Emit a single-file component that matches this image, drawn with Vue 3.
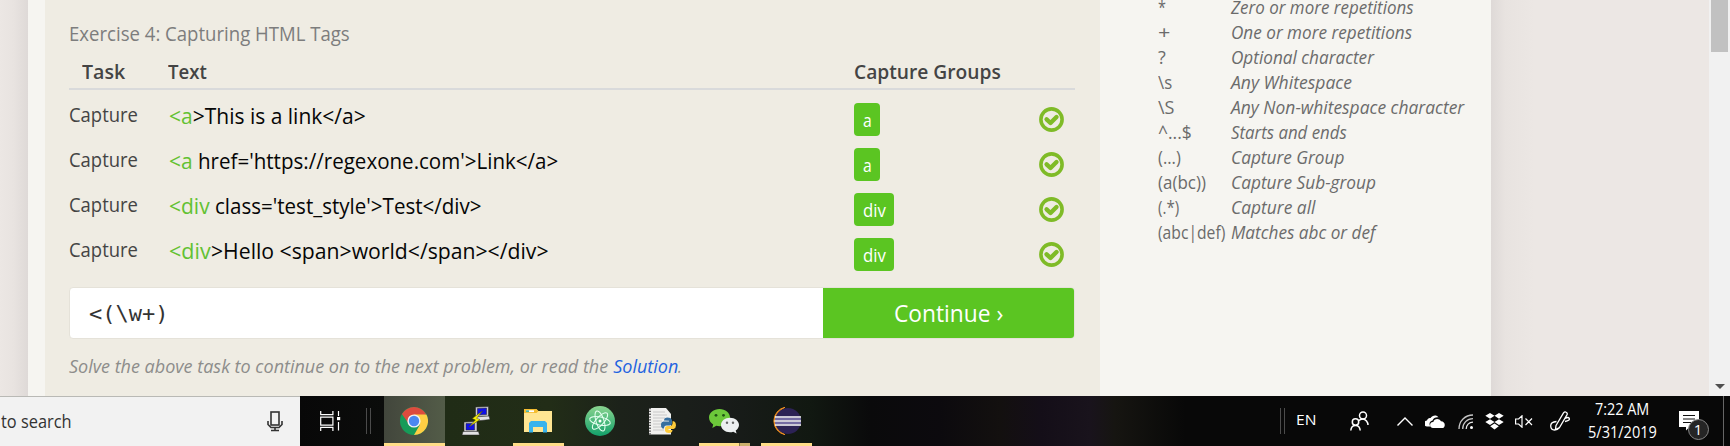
<script setup>
const applyFit = (el, { value }) => {
  el.style.transform = 'none'
  const natural = el.offsetWidth
  if (!natural) return
  el.style.transform = `scaleX(${value / natural})`
  el.style.marginRight = `${value - natural}px`
}
// Condenses a run of text to a given width.
const vFit = { mounted: applyFit, updated: applyFit }

const rows = [
  { hit: '<a', hitW: 24, rest: '>This is a link</a>', restW: 173, gap: 0, group: 'a', groupW: 9 },
  { hit: '<a', hitW: 24, rest: "href='https://regexone.com'>Link</a>", restW: 360, gap: 5, group: 'a', groupW: 9 },
  { hit: '<div', hitW: 41, rest: "class='test_style'>Test</div>", restW: 267, gap: 5, group: 'div', groupW: 23 },
  { hit: '<div', hitW: 42, rest: '>Hello <span>world</span></div>', restW: 338, gap: 0, group: 'div', groupW: 23 },
]
const notes = [
  ['*', 8, 'Zero or more repetitions', 183],
  ['+', 12, 'One or more repetitions', 181],
  ['?', 8, 'Optional character', 143],
  ['\\s', 14, 'Any Whitespace', 121],
  ['\\S', 16, 'Any Non-whitespace character', 233],
  ['^...$', 34, 'Starts and ends', 116],
  ['(...)', 23, 'Capture Group', 113],
  ['(a(bc))', 48, 'Capture Sub-group', 145],
  ['(.*)', 21, 'Capture all', 84],
  ['(abc|def)', 67, 'Matches abc or def', 144],
]
</script>

<template>
  <div class="screen">
    <div class="page">
      <div class="shade left"></div>
      <div class="stripe"></div>
      <main class="lesson">
        <div class="title"><span v-fit="281" class="t">Exercise 4: Capturing HTML Tags</span></div>
        <div class="head">
          <div class="c-task"><span v-fit="43" class="t">Task</span></div>
          <div class="c-text"><span v-fit="39" class="t">Text</span></div>
          <div class="c-group"><span v-fit="147" class="t">Capture Groups</span></div>
        </div>
        <div class="rows">
          <div v-for="(r, i) in rows" :key="i" class="row">
            <div class="c-task"><span v-fit="69" class="t">Capture</span></div>
            <div class="c-text">
              <span v-fit="r.hitW" class="t hit">{{ r.hit }}</span>
              <span v-fit="r.restW" class="t" :class="{ spaced: r.gap }">{{ r.rest }}</span>
            </div>
            <div class="c-group"><div class="badge"><span v-fit="r.groupW" class="t">{{ r.group }}</span></div></div>
            <svg class="check" width="25" height="25" viewBox="0 0 25 25">
              <circle cx="12.5" cy="12.5" r="10.6" fill="none" stroke="#7fbb27" stroke-width="3.6" />
              <path d="M7.6 12.3l3.9 3.7 6-6" fill="none" stroke="#7fbb27" stroke-width="4.4" stroke-linecap="round" stroke-linejoin="round" />
            </svg>
          </div>
        </div>
        <div class="answer">
          <div class="field"><span v-fit="79" class="t">&lt;(\w+)</span></div>
          <div class="go"><span v-fit="109" class="t">Continue ›</span></div>
        </div>
        <div class="hint">
          <span v-fit="539" class="t">Solve the above task to continue on to the next problem, or read the</span>
          <span class="ending"><span v-fit="65" class="t link">Solution</span><span v-fit="4" class="t">.</span></span>
        </div>
      </main>
      <aside class="notes">
        <div v-for="n in notes" :key="n[0]" class="note">
          <div class="sym"><span v-fit="n[1]" class="t">{{ n[0] }}</span></div>
          <div class="desc"><span v-fit="n[3]" class="t">{{ n[2] }}</span></div>
        </div>
      </aside>
      <div class="shade right"></div>
      <div class="scroll">
        <div class="thumb"></div>
        <svg width="10" height="5" viewBox="0 0 10 5"><path d="M0 0h10L5 5z" fill="#505050" /></svg>
      </div>
    </div>

    <div class="taskbar">
      <div class="search">
        <span v-fit="71" class="t">to search</span>
        <svg width="16" height="21" viewBox="0 0 16 21" fill="none" stroke="#333" stroke-width="1.6">
          <rect x="4" y="1" width="8" height="13" />
          <path d="M1 10v3.5l3 3h8l3-3V10M8 16.5V20M4 19.5h8" />
        </svg>
      </div>
      <div class="view">
        <svg width="21" height="20" viewBox="0 0 21 20" fill="none" stroke="#fff" stroke-width="1.2">
          <path d="M.7 0v3.6h12.2V0M.7 6.2h12.2v8H.7zM.7 20v-3.7h12.2V20M18.5 0v5M18.5 11v8.5" />
          <rect x="17" y="6" width="3.2" height="3.2" fill="#fff" stroke="none" />
        </svg>
      </div>
      <div class="bars first"></div>

      <div class="app active">
        <svg width="28" height="28" viewBox="0 0 28 28">
          <circle cx="14" cy="14" r="14" fill="#169b59" />
          <path d="M1.9 7A14 14 0 0 1 26.1 7L14 14 8.4 16.2z" fill="#dd4b3e" />
          <path d="M14 7.4h12.4A14 14 0 0 1 14 28l6-10.5z" fill="#ffce44" />
          <circle cx="14" cy="14" r="6.6" fill="#f3f3f3" />
          <circle cx="14" cy="14" r="5.2" fill="#4a87f0" />
        </svg>
      </div>
      <div class="app">
        <svg width="28" height="30" viewBox="0 0 28 30">
          <g stroke="#222" stroke-width=".5">
            <path d="M13.5 1l13-.5V10.500l-13 .5z" fill="#c9c9cd" />
            <path d="M15.500 2.500l9-.4v6.500l-9 .4z" fill="#1010e8" />
            <path d="M12 11l15-1 1 3.500-13 1.400z" fill="#e2e2e4" />
          </g>
          <g stroke="#222" stroke-width=".5">
            <path d="M2 16l13-.4V26H2z" fill="#c9c9cd" />
            <path d="M4 17.500h8.500V24H4z" fill="#1010e8" />
            <path d="M1 25.500h15.500l1 3.500H0z" fill="#e2e2e4" />
          </g>
          <path d="M20.500 5l-10.300 7.500 3.200 1.400L7 21l11-7.500-3.400-1.200z" fill="#f6ef08" stroke="#4b4a00" stroke-width=".5" />
        </svg>
      </div>
      <div class="app open">
        <svg width="28" height="24" viewBox="0 0 28 24">
          <path d="M0 0h12l2 2h14v21H0z" fill="#ffe592" />
          <path d="M0 0h12.5l2 2-2 2H0z" fill="#f5bd32" />
          <path d="M2 1.3h8v1.8H2z" fill="#fff" /><path d="M2 1.3h3v1.8H2z" fill="#4db7a8" />
          <path d="M5 23.6V14l2-2h14l2 2v9.6h-4V18H9v5.6z" fill="#38b3ed" />
        </svg>
      </div>
      <div class="app">
        <svg width="30" height="30" viewBox="0 0 30 30">
          <defs><linearGradient id="atom" x2="0" y2="1"><stop stop-color="#8ad48f" /><stop offset="1" stop-color="#12a06a" /></linearGradient></defs>
          <circle cx="15" cy="15" r="15" fill="url(#atom)" />
          <g fill="none" stroke="#e5fff0" stroke-width="1">
            <ellipse cx="15" cy="15" rx="10.5" ry="4" transform="rotate(12 15 15)" />
            <ellipse cx="15" cy="15" rx="10.5" ry="4" transform="rotate(72 15 15)" />
            <ellipse cx="15" cy="15" rx="10.5" ry="4" transform="rotate(132 15 15)" />
          </g>
          <circle cx="15" cy="15" r="1.5" fill="#fff" />
        </svg>
      </div>
      <div class="app">
        <svg width="28" height="29" viewBox="0 0 28 29">
          <path d="M1 1l17 0 5 6v20.5H1z" fill="#f0f0ee" />
          <path d="M2 1v27" stroke="#555" stroke-width="1.8" stroke-dasharray="1.3 1.5" />
          <path d="M5 5h12M5 8h14M5 11h12M5 14h9M5 17h10M5 20h8M5 23h11" stroke="#c8c8c8" stroke-width="1" />
          <path d="M16 13.500q0-3 3.500-3t4.500 2.400V16q0 2.500-2.500 2.500h-3q-2.500 0-2.500 3h-1.500q-2-1.500-1.500-4.500t3-2.500h5v-.8z" fill="#366f9f" />
          <path d="M24.500 14.200H26q2 1 2 4t-2.500 3.800h-5v1h4q0 3-3.500 3T17 23.500V21q0-2 2.500-2h3q2.500-.5 2-4.800z" fill="#fdcb3c" />
        </svg>
      </div>
      <div class="app open pair">
        <svg width="30" height="25" viewBox="0 0 30 25">
          <path d="M10.500 0C4.700 0 0 3.800 0 8.600c0 2.900 1.600 5.200 4.200 6.800L3.300 19l4-2.200c1 .3 2.100.4 3.200.4 5.800 0 10.500-3.800 10.500-8.600S16.300 0 10.500 0z" fill="#6cc83a" />
          <circle cx="7" cy="6.300" r="1.400" fill="#205414" /><circle cx="14.500" cy="6.300" r="1.400" fill="#205414" />
          <path d="M21 8.800c-5 0-9 3.200-9 7.200s4 7.200 9 7.200c1.200 0 2.200-.1 3.200-.5l3.400 1.900-.9-3.100c2-1.300 3.300-3.300 3.300-5.500 0-4-4-7.200-9-7.200z" fill="#eceff0" />
          <circle cx="18" cy="13.800" r="1.200" fill="#666" /><circle cx="24" cy="13.800" r="1.200" fill="#666" />
        </svg>
      </div>
      <div class="app open">
        <svg width="30" height="28" viewBox="0 0 30 28">
          <path d="M14 .3A14 14 0 0 0 14 27.700 15 15 0 0 1 14 .3z" fill="#f29222" stroke="#f29222" />
          <circle cx="17" cy="14" r="13" fill="#2c2255" />
          <path d="M4 10h26M3.500 14h27M4 18h26" stroke="#fff" stroke-width="1.700" />
          <path d="M4 12h26M4 16h26" stroke="#8c84bd" stroke-width="1.300" />
        </svg>
      </div>

      <div class="tray">
        <div class="bars"></div>
        <div class="lang"><span v-fit="20" class="t">EN</span></div>
        <div class="cell">
          <svg width="19" height="20" viewBox="0 0 19 20" fill="none" stroke="#fff" stroke-width="1.500">
            <circle cx="13" cy="4.500" r="3.500" /><path d="M8.500 9.800Q13 6 16.500 10q1.500 1.800 1.500 4" />
            <circle cx="5.500" cy="11" r="3.200" /><path d="M.8 19.500q.4-5 4.700-5t4.700 5" />
          </svg>
        </div>
        <div class="cell"><svg width="16" height="9" viewBox="0 0 16 9"><path d="M.5 8.500L8 1l7.500 7.500" fill="none" stroke="#fff" stroke-width="1.400" /></svg></div>
        <div class="cell">
          <svg width="20" height="13" viewBox="0 0 20 13">
            <path d="M2.500 11.500A3 3 0 0 1 2 5.500C2.500 3.500 4 2.600 5.600 3 7 .3 11.500-.8 13.500 2.400c-3-.3-5 .8-6 3-2.800.3-4 3.800-2 6.100z" fill="#fff" />
            <path d="M8 13a3 3 0 0 1 .3-6.100C9 3.600 14 2.500 16 6.300c4 .1 5 4.700 2.100 6.700z" fill="#fff" />
          </svg>
        </div>
        <div class="cell">
          <svg width="15" height="15" viewBox="0 0 15 15" fill="none" stroke-width="1.300">
            <path d="M1 15C1 7 7 1 15 1M4.700 15c0-6 4.300-10.300 10.300-10.300" stroke="#c6c6c6" />
            <path d="M8.200 15C8.200 11 11 8.200 15 8.200" stroke="#e5e5e5" /><circle cx="13.500" cy="13.500" r="1.500" fill="#fff" />
          </svg>
        </div>
        <div class="cell">
          <svg width="19" height="17" viewBox="0 0 19 17" fill="#fff">
            <path d="M5 0l4.500 2.800L5 5.700.3 2.800zM14 0l4.700 2.800L14 5.700 9.500 2.800zM5 6.200L9.500 9 5 11.900.3 9zM14 6.200L18.700 9 14 11.900 9.500 9zM9.500 10.500l4.300 2.700-4.300 3.300-4.300-3.300z" />
          </svg>
        </div>
        <div class="cell">
          <svg width="18" height="13" viewBox="0 0 18 13" fill="none" stroke="#fff" stroke-width="1.200">
            <path d="M.6 4h3L7 .8v11.400L3.600 9h-3zM10.500 3.500l6.500 6.500M17 3.500L10.500 10" />
          </svg>
        </div>
        <div class="cell">
          <svg width="20" height="20" viewBox="0 0 20 20" fill="none" stroke="#fff" stroke-width="1.300">
            <path d="M6 14.500L13.500 1.800q1.700-2 3.500.2.600 1-.2 2.200L9.500 16.500 5.500 18.500zM15 7.500q3.500-2 4.300 0t-4.300 3M6.500 10.500Q.5 11 .7 15t3.800 4q3 0 5-2.500" />
          </svg>
        </div>
        <div class="clock">
          <div><span v-fit="54" class="t">7:22 AM</span></div>
          <div><span v-fit="69" class="t">5/31/2019</span></div>
        </div>
        <div class="cell">
          <div class="bell">
            <svg width="20" height="20" viewBox="0 0 20 20"><path d="M0 0h20v16h-9.500L7 19.500V16H0z" fill="#fff" /><path d="M4 4.500h12M4 8h12M4 11.500h8" stroke="#111" stroke-width="1.200" /></svg>
            <span class="count">1</span>
          </div>
        </div>
        <div class="edge"></div>
      </div>
    </div>
  </div>
</template>

<style>
body { margin: 0; overflow: hidden; }
</style>

<style scoped>
.screen { width: 1730px; height: 446px; overflow: hidden; font-family: "Open Sans", "Noto Sans", sans-serif; }
.screen * { box-sizing: border-box; }
.t { display: inline-block; white-space: nowrap; transform-origin: 0 50%; }
.page { display: flex; height: 396px; overflow: hidden; background: #ece7e4; }
.shade.left { width: 28px; background: linear-gradient(90deg, #ece7e4 0, #e8e3e0 50%, #ded9d7 100%); }
.shade.right { width: 218px; background: linear-gradient(90deg, #ded9d7 0, #e8e3e0 14px, #ece7e4 44px); }
.stripe { width: 17px; background: #f6f5f1; }
.lesson { width: 1055px; padding: 19px 25px 0 24px; background: #efece3; }
.title { height: 30px; line-height: 30px; font-size: 19.500px; color: #7d7d7d; }
.head { display: flex; height: 38px; margin-top: 3px; border-bottom: 2px solid #d9dadb; line-height: 38px; font-size: 20.500px; font-weight: 600; color: #444; }
.head .c-task { width: 99px; padding-left: 13px; }
.head .c-text { width: 686px; }
.rows { margin-top: 7px; }
.row { display: flex; align-items: center; height: 45px; }
.row .c-task { width: 100px; padding-bottom: 10px; line-height: 33px; font-size: 19.500px; color: #444; }
.row .c-text { display: flex; width: 685px; padding-bottom: 7px; line-height: 38px; font-size: 21px; color: #060606; }
.row .c-text .hit { color: #62c132; }
.row .c-text .spaced { position: relative; left: 5px; }
.c-group { width: 185px; }
.badge { display: inline-flex; height: 33px; padding: 0 8.500px; align-items: center; border-radius: 4px; background: #5bc522; color: #fff; font-size: 17.500px; vertical-align: middle; }
.answer { display: flex; height: 52px; margin-top: 10px; border: 1px solid #e5e2d9; border-radius: 4px; overflow: hidden; background: #fff; }
.field { flex: 1; padding-left: 19px; line-height: 51px; font-family: "DejaVu Sans Mono", monospace; font-size: 22px; color: #333; }
.go { width: 251px; padding-left: 71px; line-height: 50px; background: #5bc522; color: #fff; font-size: 24px; }
.hint { display: flex; gap: 5px; margin-top: 12px; line-height: 31px; font-size: 18px; font-style: italic; color: #8d8d8b; }
.ending { display: flex; }
.link { color: #1f63e0; }
.notes { width: 391px; margin-top: -5px; padding-left: 58px; background: #f6f5f1; }
.note { display: flex; height: 25px; line-height: 25px; font-size: 18px; color: #6b6b6b; }
.sym { width: 73px; }
.desc { font-style: italic; }
.scroll { display: flex; flex-direction: column; justify-content: space-between; align-items: center; width: 21px; padding-bottom: 7px; background: #f1f1f1; }
.thumb { width: 17px; height: 52px; background: #c1c1c1; }

.taskbar { display: flex; height: 50px; background: linear-gradient(90deg, #080808 300px, #0b0c0b 384px, #202c16 446px, #222d17 550px, #1c221a 620px, #191c1a 720px, #111811 810px, #0a0a0b 870px, #0c0a0e 940px, #13100f 1000px, #140e18 1040px, #19131c 1090px, #161511 1115px, #080808 1185px); }
.search { display: flex; align-items: center; justify-content: space-between; width: 300px; padding: 0 17px 0 1px; border-top: 1px solid #b9b9b5; background: #f2f2f2; color: #333; font-size: 18px; }
.search .t { line-height: 22px; padding-bottom: 2px; }
.view { display: flex; align-items: center; width: 66px; padding-left: 20px; }
.bars { align-self: center; width: 5px; height: 26px; border: solid #4b4b4b; border-width: 0 1px; }
.bars.first { margin-right: 13px; }
.app { display: flex; align-items: center; justify-content: center; width: 61px; margin-right: 1px; padding-right: 2px; }
.app.active { background: linear-gradient(90deg, #42463c, #535c48); box-shadow: inset 0 -3px #ffdd88; }
.app.open { background: linear-gradient(#ffdd88, #ffdd88) 5px 47px / 51px 3px no-repeat; }
.app.pair { background: linear-gradient(90deg, #ffdd88 40px, #8e7a4d 40px, #8e7a4d 41px, #cbb06d 41px) 5px 47px / 51px 3px no-repeat; }
.tray { display: grid; grid-template-columns: 5px 43px 63px 27px 34px 27px 31px 28px 44px 80px 53px 15px; margin-left: auto; color: #fff; }
.tray .cell, .lang { display: flex; align-items: center; justify-content: center; }
.lang { font-size: 14px; padding-bottom: 4px; }
.clock { padding-top: 2px; text-align: center; font-size: 16px; line-height: 23px; }
.bell { position: relative; display: flex; }
.count { position: absolute; left: 9px; top: 8px; width: 21px; height: 21px; border: 1.500px solid #888; border-radius: 50%; background: #252525; font-size: 15px; line-height: 18px; text-align: center; }
.edge { width: 9px; border-right: 1px solid #666; }
</style>
